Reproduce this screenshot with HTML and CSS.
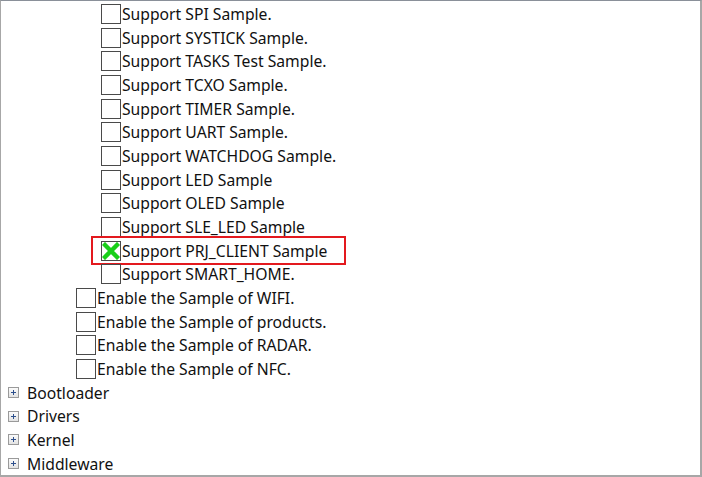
FILE: index.html
```html
<!DOCTYPE html>
<html>
<head>
<meta charset="utf-8">
<link rel="stylesheet" href="styles.css">
</head>
<body>
<div class="tree">
  <div class="row l2"><span class="cb"></span><span class="label">Support SPI Sample.</span></div>
  <div class="row l2"><span class="cb"></span><span class="label">Support SYSTICK Sample.</span></div>
  <div class="row l2"><span class="cb"></span><span class="label">Support TASKS Test Sample.</span></div>
  <div class="row l2"><span class="cb"></span><span class="label">Support TCXO Sample.</span></div>
  <div class="row l2"><span class="cb"></span><span class="label">Support TIMER Sample.</span></div>
  <div class="row l2"><span class="cb"></span><span class="label">Support UART Sample.</span></div>
  <div class="row l2"><span class="cb"></span><span class="label">Support WATCHDOG Sample.</span></div>
  <div class="row l2"><span class="cb"></span><span class="label">Support LED Sample</span></div>
  <div class="row l2"><span class="cb"></span><span class="label">Support OLED Sample</span></div>
  <div class="row l2"><span class="cb"></span><span class="label">Support SLE_LED Sample</span></div>
  <div class="row l2 selected">
    <span class="cb checked"><svg width="18" height="18" viewBox="0 0 18 18"><path d="M3 3 L15 15 M15 3 L3 15" stroke="#19cf19" stroke-width="4.4" stroke-linecap="square"/></svg></span><span class="label">Support PRJ_CLIENT Sample</span>
    <span class="highlight"></span>
  </div>
  <div class="row l2"><span class="cb"></span><span class="label">Support SMART_HOME.</span></div>
  <div class="row l1"><span class="cb"></span><span class="label">Enable the Sample of WIFI.</span></div>
  <div class="row l1"><span class="cb"></span><span class="label">Enable the Sample of products.</span></div>
  <div class="row l1"><span class="cb"></span><span class="label">Enable the Sample of RADAR.</span></div>
  <div class="row l1"><span class="cb"></span><span class="label">Enable the Sample of NFC.</span></div>
  <div class="row l0"><span class="exp"><svg width="9" height="9" viewBox="0 0 9 9"><path d="M2 4.5 H7 M4.5 2 V7" stroke="#2d4f8c" stroke-width="1"/></svg></span><span class="label">Bootloader</span></div>
  <div class="row l0"><span class="exp"><svg width="9" height="9" viewBox="0 0 9 9"><path d="M2 4.5 H7 M4.5 2 V7" stroke="#2d4f8c" stroke-width="1"/></svg></span><span class="label">Drivers</span></div>
  <div class="row l0"><span class="exp"><svg width="9" height="9" viewBox="0 0 9 9"><path d="M2 4.5 H7 M4.5 2 V7" stroke="#2d4f8c" stroke-width="1"/></svg></span><span class="label">Kernel</span></div>
  <div class="row l0"><span class="exp"><svg width="9" height="9" viewBox="0 0 9 9"><path d="M2 4.5 H7 M4.5 2 V7" stroke="#2d4f8c" stroke-width="1"/></svg></span><span class="label">Middleware</span></div>
</div>
</body>
</html>
```
FILE: styles.css
```css
html, body {
  margin: 0;
  padding: 0;
  background: #fff;
}
.tree {
  width: 702px;
  height: 477px;
  box-sizing: border-box;
  border-top: 1px solid #8a9099;
  border-left: 1px solid #a7a7a7;
  border-right: 2px solid #a7a7a7;
  border-bottom: 2px solid #a7a7a7;
  background: #fff;
  overflow: hidden;
  padding-top: 1px;
  font-family: "Noto Sans", "Open Sans", sans-serif;
  font-size: 15.7px;
  color: #111;
}
.row {
  position: relative;
  display: flex;
  align-items: center;
  height: 23.68px;
  white-space: nowrap;
}
.l2 { padding-left: 100px; }
.l1 { padding-left: 75px; }
.l0 { padding-left: 7px; }
.cb {
  width: 20px;
  height: 20px;
  box-sizing: border-box;
  border: 1px solid #4a4a4a;
  background: #fff;
  display: flex;
  align-items: center;
  justify-content: center;
  flex: none;
}
.cb svg { display: block; }
.label { margin-left: 1px; }
.l0 .label { margin-left: 8px; }
.exp {
  width: 11px;
  height: 11px;
  box-sizing: border-box;
  border: 1px solid #9a9a9a;
  background: linear-gradient(#fbfbfb, #e3e3e3);
  display: flex;
  align-items: center;
  justify-content: center;
  flex: none;
}
.exp svg { display: block; }
.highlight {
  position: absolute;
  left: 90px;
  top: -3px;
  width: 255px;
  height: 29px;
  box-sizing: border-box;
  border: 2px solid #e3191e;
  pointer-events: none;
}
```
